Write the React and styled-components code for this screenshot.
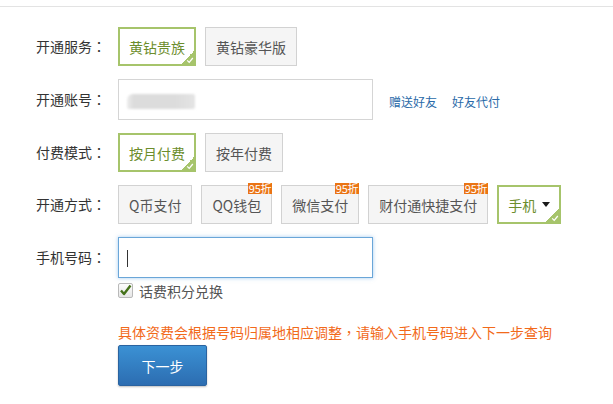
import React from 'react';
import styled, { createGlobalStyle, css } from 'styled-components';

const GlobalStyle = createGlobalStyle`
  html, body {
    margin: 0;
    padding: 0;
    background: #fff;
    font-family: "Microsoft YaHei", "Noto Sans CJK SC", "Noto Sans", sans-serif;
  }
`;

const GREEN = '#a6c46b';

const Page = styled.div`
  width: 613px;
  height: 404px;
  overflow: hidden;
`;

const TopRule = styled.div`
  height: 6px;
  border-bottom: 1px solid #e3e3e3;
`;

const Form = styled.div`
  display: flex;
  flex-direction: column;
  gap: 13px;
  padding: 20px 0 0 36px;
`;

const Row = styled.div`
  display: flex;
  align-items: flex-start;
`;

const Label = styled.div`
  width: 82px;
  flex-shrink: 0;
  height: ${(p) => p.$h || 39}px;
  line-height: ${(p) => p.$h || 39}px;
  font-size: 14px;
  color: #333;
`;

// centred full-width punctuation, as the original font draws it
const Punct = styled.span`
  font-family: "Noto Sans CJK TC", sans-serif;
`;

const Options = styled.div`
  display: flex;
  gap: 9px;
`;

const Option = styled.div`
  position: relative;
  box-sizing: border-box;
  height: 39px;
  display: flex;
  align-items: center;
  padding: 0 10px;
  border: 1px solid #d2d2d2;
  background: #f5f5f5;
  color: #555;
  font-size: 14px;
  line-height: 20px;
  white-space: nowrap;
  ${(p) =>
    p.$active &&
    css`
      padding: 0 9px;
      border: 2px solid ${GREEN};
      background: #fff;
      color: #6c8d2c;
    `}
`;

const Corner = styled.span`
  position: absolute;
  right: 0;
  bottom: 0;
  width: 13px;
  height: 13px;
  background: linear-gradient(135deg, transparent 50%, ${GREEN} 50%);
  display: flex;
  align-items: flex-end;
  justify-content: flex-end;
`;

const Badge = styled.span`
  position: absolute;
  top: -3px;
  right: -1px;
  height: 11px;
  padding: 0 1px;
  background: #ea7414;
  color: #fff;
  font-size: 11px;
  line-height: 11px;
  letter-spacing: -0.3px;
`;

const Caret = styled.span`
  display: inline-block;
  margin-left: 6px;
  width: 0;
  height: 0;
  border-left: 4px solid transparent;
  border-right: 4px solid transparent;
  border-top: 5px solid #1a1a1a;
`;

const TextBox = styled.div`
  box-sizing: border-box;
  width: 255px;
  height: 41px;
  display: flex;
  align-items: center;
  padding-left: 8px;
  background: #fff;
  border: 1px solid ${(p) => (p.$focus ? '#6aa6d8' : '#d5d5d5')};
  ${(p) =>
    p.$focus &&
    css`
      box-shadow: 0 0 4px rgba(90, 160, 225, 0.55);
    `}
`;

const Masked = styled.span`
  display: block;
  width: 68px;
  height: 15px;
  margin-top: 4px;
  background: linear-gradient(90deg, #ececec 0, #dcdcdc 10%, #dcdcdc 70%, #e4e4e4 100%);
  border-radius: 6px 2px 2px 2px;
  filter: blur(0.8px);
`;

const TypeCursor = styled.span`
  display: block;
  width: 1px;
  height: 17px;
  margin-top: 2px;
  background: #333;
`;

const Links = styled.div`
  display: flex;
  gap: 15px;
  margin-left: 16px;
  height: 41px;
  align-items: center;
  padding-top: 4px;
  box-sizing: border-box;
`;

const TextLink = styled.a`
  font-size: 12px;
  color: #2a6aa8;
  text-decoration: none;
`;

const Field = styled.div`
  display: flex;
  flex-direction: column;
`;

const CheckRow = styled.label`
  display: flex;
  align-items: center;
  margin-top: 5px;
  height: 15px;
  font-size: 14px;
  color: #555;
  gap: 6px;
`;

const CheckBox = styled.span`
  box-sizing: border-box;
  width: 15px;
  height: 15px;
  border: 1px solid #b9b9b9;
  border-radius: 2px;
  background: linear-gradient(#fdfdfd, #e6e6e6);
  display: flex;
  align-items: center;
  justify-content: center;
`;

const Footer = styled.div`
  padding-left: 118px;
  margin-top: 24px;
`;

const Tip = styled.p`
  margin: 0;
  font-size: 14px;
  line-height: 20px;
  color: #f26a1b;
  white-space: nowrap;
`;

const NextButton = styled.button`
  margin-top: 3px;
  width: 89px;
  height: 41px;
  border: 1px solid #2a63a0;
  border-radius: 2px;
  background: linear-gradient(#3b91d4, #2c6db1);
  box-shadow: 0 1px 2px rgba(0, 0, 0, 0.25);
  color: #fff;
  font-family: inherit;
  font-size: 14px;
  cursor: pointer;
`;

const Tick = ({ color = '#fff', size = 8 }) => (
  <svg width={size} height={size} viewBox="0 0 10 10">
    <path d="M1.5 5.5 L4 8 L8.5 2.5" fill="none" stroke={color} strokeWidth="1.6" />
  </svg>
);

const BigTick = () => (
  <svg width="13" height="13" viewBox="0 0 13 13">
    <path d="M2 6.5 L5 10 L11.5 1.5" fill="none" stroke="#45721a" strokeWidth="2.4" strokeLinejoin="round" />
  </svg>
);

const ChoiceGroup = ({ items }) => (
  <Options>
    {items.map((it) => (
      <Option key={it.text} $active={it.active}>
        {it.text}
        {it.dropdown && <Caret />}
        {it.badge && <Badge>{it.badge}</Badge>}
        {it.active && (
          <Corner>
            <Tick />
          </Corner>
        )}
      </Option>
    ))}
  </Options>
);

const FieldLabel = ({ text, h }) => (
  <Label $h={h}>
    {text}
    <Punct>：</Punct>
  </Label>
);

const App = () => (
  <Page>
    <GlobalStyle />
    <TopRule />
    <Form>
      <Row>
        <FieldLabel text="开通服务" />
        <ChoiceGroup
          items={[
            { text: '黄钻贵族', active: true },
            { text: '黄钻豪华版' },
          ]}
        />
      </Row>
      <Row>
        <FieldLabel text="开通账号" h={41} />
        <TextBox>
          <Masked />
        </TextBox>
        <Links>
          <TextLink href="#">赠送好友</TextLink>
          <TextLink href="#">好友代付</TextLink>
        </Links>
      </Row>
      <Row>
        <FieldLabel text="付费模式" />
        <ChoiceGroup
          items={[
            { text: '按月付费', active: true },
            { text: '按年付费' },
          ]}
        />
      </Row>
      <Row>
        <FieldLabel text="开通方式" />
        <ChoiceGroup
          items={[
            { text: 'Q币支付' },
            { text: 'QQ钱包', badge: '95折' },
            { text: '微信支付', badge: '95折' },
            { text: '财付通快捷支付', badge: '95折' },
            { text: '手机', active: true, dropdown: true },
          ]}
        />
      </Row>
      <Row>
        <FieldLabel text="手机号码" h={41} />
        <Field>
          <TextBox $focus>
            <TypeCursor />
          </TextBox>
          <CheckRow>
            <CheckBox>
              <BigTick />
            </CheckBox>
            话费积分兑换
          </CheckRow>
        </Field>
      </Row>
    </Form>
    <Footer>
      <Tip>
        具体资费会根据号码归属地相应调整<Punct>，</Punct>请输入手机号码进入下一步查询
      </Tip>
      <NextButton>下一步</NextButton>
    </Footer>
  </Page>
);

export default App;
